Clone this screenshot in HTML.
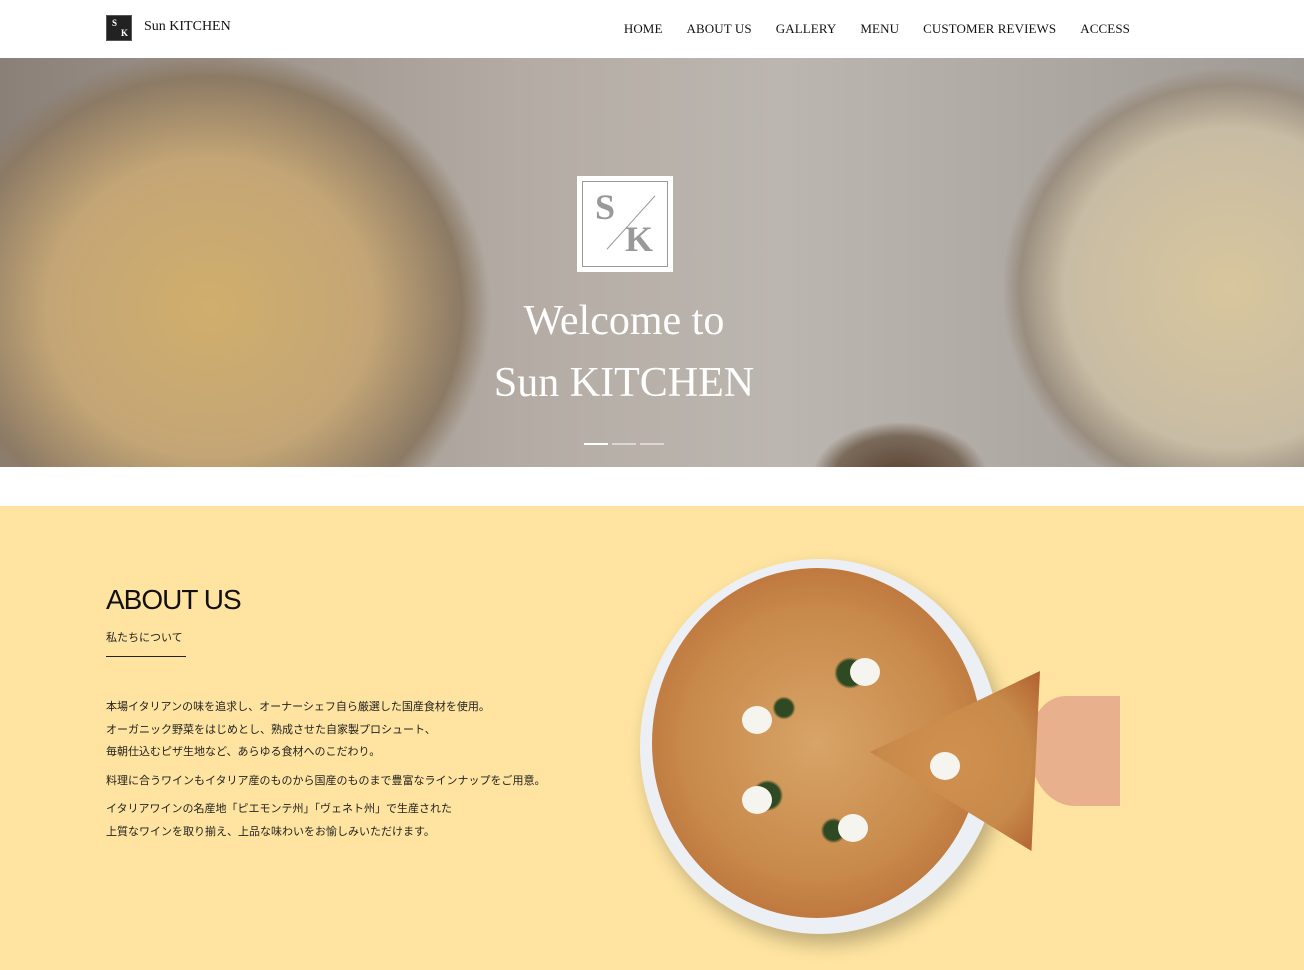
<!DOCTYPE html>
<html><head><meta charset="utf-8"><style>
*{margin:0;padding:0;box-sizing:border-box}
body{width:1304px;height:970px;overflow:hidden;background:#fff;font-family:"Liberation Serif","Noto Serif CJK SC",serif}
header{height:58px;position:relative}
.logo{position:absolute;left:106px;top:15px;width:26px;height:26px;background:#222;border:1px solid #555}
.logo span{position:absolute;color:#fff;font-size:9px;font-weight:bold}
.brand{position:absolute;left:144px;top:19px;font-size:14px;color:#111}
nav{position:absolute;right:174px;top:21px;font-size:13px;color:#111}
nav a{margin-left:24px;letter-spacing:.1px}
.hero{position:absolute;top:58px;left:0;width:1304px;height:409px;overflow:hidden;
background:
radial-gradient(ellipse 360px 330px at 210px 250px,#d0ae6c 0%,#c4a676 45%,#8c7a65 70%,rgba(110,100,90,0) 78%),
radial-gradient(ellipse 300px 290px at 1230px 230px,#d8c69c 0%,#c8bca4 55%,#9a8e80 70%,rgba(0,0,0,0) 76%),
radial-gradient(ellipse 110px 70px at 900px 420px,#5a4030 0%,#7a6a5a 60%,rgba(0,0,0,0) 80%),
linear-gradient(90deg,#8a8078 0%,#b4aca4 40%,#bcb6b0 60%,#a09a94 100%)}
.sk{position:absolute;left:577px;top:118px;width:96px;height:96px;background:#fff}
.sk .in{position:absolute;left:5px;top:5px;right:5px;bottom:5px;border:1px solid #999}
.sk .s,.sk .k{position:absolute;font-size:36px;color:#999;font-weight:bold}
.sk .s{left:18px;top:10px}.sk .k{left:48px;top:42px}
.sk .ln{position:absolute;left:18px;top:46px;width:72px;height:1px;background:#999;transform:rotate(-48deg)}
.title{position:absolute;top:232px;left:-42px;width:1304px;text-align:center;color:#fff;font-size:42px;line-height:62px;padding-left:28px}
.dots{position:absolute;top:385px;left:584px}
.dots i{display:inline-block;width:24px;height:2px;background:rgba(255,255,255,.5);margin-right:4px;vertical-align:top}
.dots i:first-child{background:#fff}
.about{position:absolute;top:506px;left:0;width:1304px;height:464px;background:#fee4a0}
h2{position:absolute;left:106px;top:78px;font:400 28px "Liberation Sans",sans-serif;color:#111;letter-spacing:-1px}
.sub{position:absolute;left:106px;top:123px;font:11px "Liberation Sans","Noto Sans CJK JP",sans-serif;color:#222}
.rule{position:absolute;left:106px;top:150px;width:80px;height:1px;background:#222}
.txt{position:absolute;left:106px;top:190px;font:11px/22.5px "Liberation Sans","Noto Sans CJK JP",sans-serif;color:#222}
.txt p{margin-bottom:6px}
.pizza{position:absolute;left:640px;top:53px;width:360px;height:375px;border-radius:50%;background:#eceff3;box-shadow:6px 10px 18px rgba(0,0,0,.25)}
.pz{position:absolute;left:652px;top:62px;width:330px;height:350px;border-radius:50%;
background:radial-gradient(circle at 40% 40%,#2f4a22 0 3%,transparent 4%),radial-gradient(circle at 60% 30%,#2f4a22 0 4%,transparent 5%),radial-gradient(circle at 35% 65%,#2f4a22 0 4%,transparent 5%),radial-gradient(circle at 55% 75%,#2f4a22 0 3%,transparent 4%),
radial-gradient(circle at 50% 50%,#d8a468 0%,#c88a4a 55%,#b86a36 88%,#8a4420 100%)}
.moz{position:absolute;width:30px;height:28px;border-radius:50%;background:#f6f4ee}
.slice{position:absolute;left:870px;top:165px;width:170px;height:180px;background:radial-gradient(circle,#d09050,#c88a4a 60%,#b06030);clip-path:polygon(0 45%,100% 0,95% 100%)}
.hand{position:absolute;left:1030px;top:190px;width:90px;height:110px;background:#e8b08c;border-radius:40% 0 0 50%}
</style></head><body>
<header>
<div class="logo"><span style="left:5px;top:2px">S</span><span style="left:14px;top:12px">K</span></div>
<div class="brand">Sun KITCHEN</div>
<nav><a>HOME</a><a>ABOUT US</a><a>GALLERY</a><a>MENU</a><a>CUSTOMER REVIEWS</a><a>ACCESS</a></nav>
</header>
<div class="hero">
<div class="sk"><div class="in"></div><span class="s">S</span><div class="ln"></div><span class="k">K</span></div>
<div class="title">Welcome to<br>Sun KITCHEN</div>
<div class="dots"><i></i><i></i><i></i></div>
</div>
<div class="about">
<h2>ABOUT US</h2>
<div class="sub">私たちについて</div>
<div class="rule"></div>
<div class="txt">
<p>本場イタリアンの味を追求し、オーナーシェフ自ら厳選した国産食材を使用。<br>オーガニック野菜をはじめとし、熟成させた自家製プロシュート、<br>毎朝仕込むピザ生地など、あらゆる食材へのこだわり。</p>
<p>料理に合うワインもイタリア産のものから国産のものまで豊富なラインナップをご用意。</p>
<p>イタリアワインの名産地「ピエモンテ州」「ヴェネト州」で生産された<br>上質なワインを取り揃え、上品な味わいをお愉しみいただけます。</p>
</div>
<div class="pizza"></div><div class="pz"></div><div class="hand"></div><div class="slice"></div>
<div class="moz" style="left:850px;top:152px"></div><div class="moz" style="left:742px;top:200px"></div><div class="moz" style="left:742px;top:280px"></div><div class="moz" style="left:838px;top:308px"></div><div class="moz" style="left:930px;top:246px"></div>
</div>
</body></html>
